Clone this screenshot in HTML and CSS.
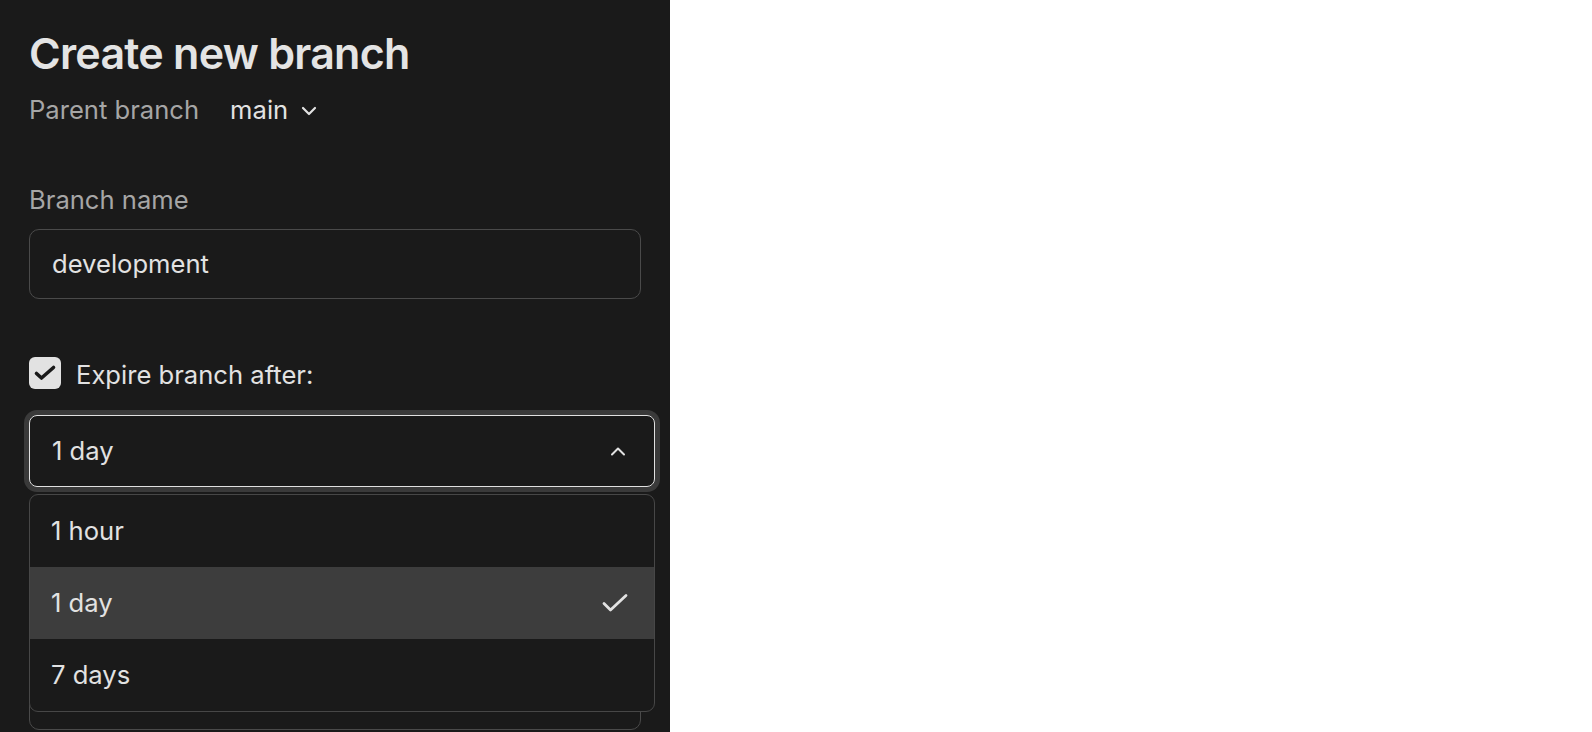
FILE: index.html
```html
<!DOCTYPE html>
<html lang="en">
<head>
<meta charset="utf-8">
<title>Create new branch</title>
<link rel="stylesheet" href="styles.css">
</head>
<body>
<div class="panel">
  <h1 class="title">Create new branch</h1>
  <div class="parent-row">
    <span class="parent-label">Parent branch</span>
    <button class="parent-select" type="button">
      <span>main</span>
      <svg class="chev-down" width="16" height="10" viewBox="0 0 16 10"><polyline points="2,2 8,8 14,2" fill="none" stroke="currentColor" stroke-width="2.2" stroke-linecap="round" stroke-linejoin="round"/></svg>
    </button>
  </div>

  <label class="field-label">Branch name</label>
  <div class="text-input">development</div>

  <div class="check-row">
    <span class="checkbox">
      <svg width="32" height="32" viewBox="0 0 32 32"><polyline points="7.5,16.5 12.5,21 24.5,10.5" fill="none" stroke="#1a1a1a" stroke-width="3.6" stroke-linecap="round" stroke-linejoin="round"/></svg>
    </span>
    <span class="check-label">Expire branch after:</span>
  </div>

  <div class="select-wrap">
    <div class="select-trigger">
      <span>1 day</span>
      <svg class="chev-up" width="16" height="10" viewBox="0 0 16 10"><polyline points="2,8.5 8,2.5 14,8.5" fill="none" stroke="currentColor" stroke-width="2" stroke-linecap="round" stroke-linejoin="round"/></svg>
    </div>
    <div class="menu">
      <div class="menu-item">1 hour</div>
      <div class="menu-item selected">
        <span>1 day</span>
        <svg width="26" height="20" viewBox="0 0 26 20"><polyline points="2,10.5 8.5,17 24,2.5" fill="none" stroke="currentColor" stroke-width="2.8" stroke-linecap="round" stroke-linejoin="round"/></svg>
      </div>
      <div class="menu-item">7 days</div>
    </div>
  </div>

  <label class="field-label lower">Compute size</label>
  <div class="text-input tall"></div>
</div>
</body>
</html>
```

FILE: styles.css
```css
html, body {
  margin: 0;
  padding: 0;
  background: #ffffff;
  height: 100%;
  overflow: hidden;
}

.panel {
  box-sizing: border-box;
  width: 670px;
  height: 100vh;
  background: #1a1a1a;
  padding: 26px 29px 0 29px;
  overflow: hidden;
  font-family: Inter, "Noto Sans", sans-serif;
  color: #e2e2e2;
  font-size: 25.6px;
  line-height: 32px;
}

.title {
  margin: 0;
  font-size: 43px;
  line-height: 54px;
  font-weight: 600;
  color: #e4e4e4;
  letter-spacing: -0.75px;
}

.parent-row {
  display: flex;
  align-items: center;
  margin-top: 14px;
  gap: 31px;
}

.parent-label {
  color: #a6a6a6;
}

.parent-select {
  display: flex;
  align-items: center;
  gap: 13px;
  background: none;
  border: 0;
  padding: 0;
  font: inherit;
  color: #e2e2e2;
}

.chev-down {
  color: #e2e2e2;
  margin-top: 1px;
}

.field-label {
  display: block;
  margin-top: 58px;
  color: #a6a6a6;
}

.text-input {
  box-sizing: border-box;
  width: 612px;
  height: 70px;
  margin-top: 13px;
  border: 1px solid #4a4a4a;
  border-radius: 10px;
  padding: 0 22px;
  display: flex;
  align-items: center;
  color: #e2e2e2;
}

.check-row {
  display: flex;
  align-items: center;
  gap: 15px;
  margin-top: 58px;
}

.checkbox {
  width: 32px;
  height: 32px;
  border-radius: 6px;
  background: #e2e2e2;
  display: flex;
}

.check-label {
  color: #e2e2e2;
  padding-top: 4px;
  line-height: 28px;
}

.select-wrap {
  position: relative;
  margin-top: 26px;
  width: 626px;
}

.select-trigger {
  box-sizing: border-box;
  height: 72px;
  border: 1px solid #e0e0e0;
  border-radius: 8px;
  box-shadow: 0 0 0 5px #3a3a3a;
  padding: 0 28px 0 22px;
  display: flex;
  align-items: center;
  justify-content: space-between;
  color: #e2e2e2;
}

.chev-up {
  color: #e2e2e2;
}

.menu {
  position: absolute;
  left: 0;
  right: 0;
  top: 79px;
  box-sizing: border-box;
  background: #1a1a1a;
  border: 1px solid #474747;
  border-radius: 9px;
  overflow: hidden;
  z-index: 2;
}

.menu-item {
  height: 72px;
  padding: 0 26px 0 21px;
  display: flex;
  align-items: center;
  justify-content: space-between;
  color: #e2e2e2;
}

.menu-item.selected {
  background: #3d3d3d;
}

.field-label.lower {
  margin-top: 58px;
}

.text-input.tall {
  height: 140px;
}
```
